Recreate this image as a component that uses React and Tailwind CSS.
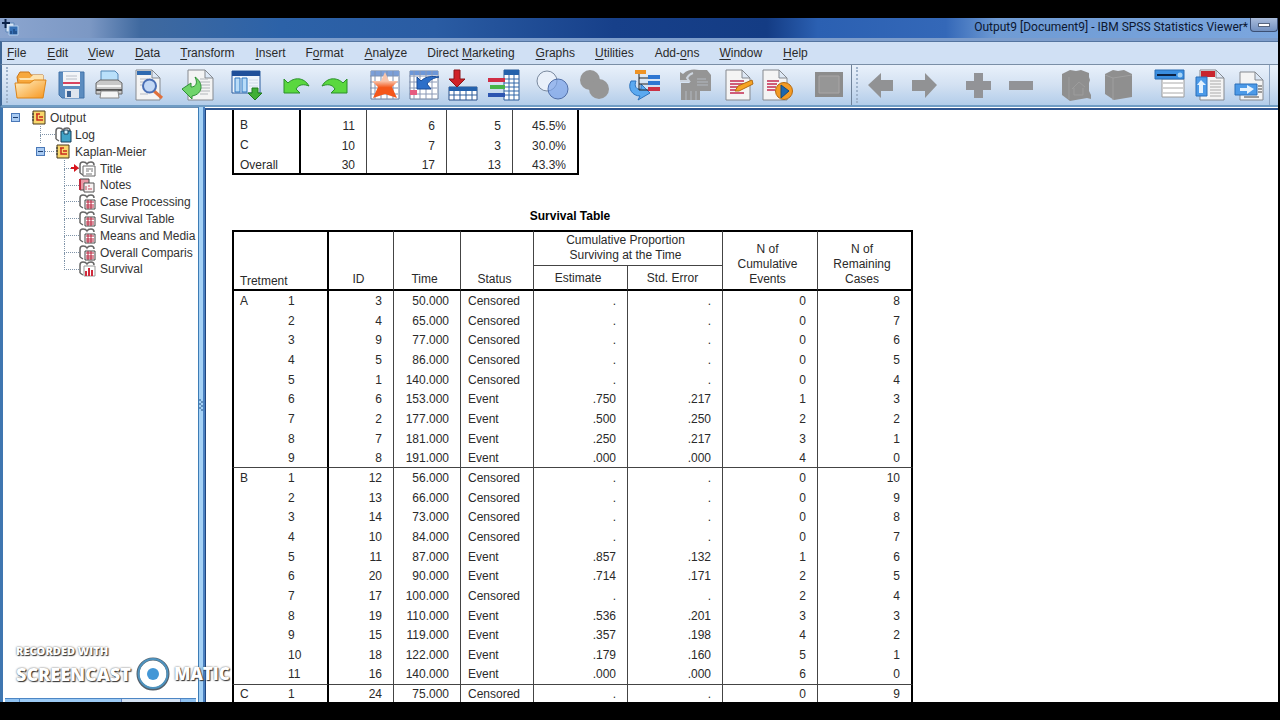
import React, { useState } from 'react'
import clsx from 'clsx'

const menus = [
  ['', 'F', 'ile'],
  ['', 'E', 'dit'],
  ['', 'V', 'iew'],
  ['', 'D', 'ata'],
  ['', 'T', 'ransform'],
  ['', 'I', 'nsert'],
  ['F', 'o', 'rmat'],
  ['', 'A', 'nalyze'],
  ['Direct ', 'M', 'arketing'],
  ['', 'G', 'raphs'],
  ['', 'U', 'tilities'],
  ['Add-', 'o', 'ns'],
  ['', 'W', 'indow'],
  ['', 'H', 'elp'],
]

const Page = ({ x = 4, w = 24 }) => (
  <path
    d={`M${x} 1h${w - 8}l8 8v22h-${w}z M${x + w - 8} 1v8h8`}
    fill="#f4f4f4"
    stroke="#85898f"
    strokeLinejoin="round"
  />
)

const grid = 'M1 7h28M1 13h28M1 19h28M1 25h28M6 2v28M12 2v28M18 2v28M24 2v28'

const icons = {
  open: (
    <>
      <path d="M2 8l3-5h9l2 3h12v14H4z" fill="#f7a83c" stroke="#c9761a" />
      <path d="M4 9h11l3-3h10v5H5z" fill="#fde3b0" />
      <path d="M0 14h15l4-3h12l-3 18H2z" fill="url(#folder)" stroke="#dd8417" />
    </>
  ),
  save: (
    <>
      <path d="M5 3h25v26H8l-3-3z" fill="#5b8cc0" stroke="#4372a8" />
      <path d="M9 3h17v14H9z" fill="#f3f5f8" />
      <path d="M12 7h11M12 10h11" stroke="#b9bec8" />
      <path d="M9 14h17" stroke="#d8435f" strokeWidth="2" />
      <path d="M11 20h14v9H11z" fill="#dfe5ee" />
      <path d="M13 22h4v6h-4z" fill="#3c6395" />
    </>
  ),
  print: (
    <>
      <path d="M8 13V2h14l3 3v8z" fill="#b9e0fa" stroke="#5287b5" />
      <path d="M3 14l4-3h18l4 3v11H3z" fill="#c8c8c8" stroke="#666" />
      <path d="M4 17h24" stroke="#f5f5f5" strokeWidth="2" />
      <path d="M3 21h26" stroke="#555" strokeWidth="2" />
      <path d="M8 22h17l1 7H7z" fill="#f5f5f5" stroke="#888" />
    </>
  ),
  preview: (
    <>
      <Page />
      <path d="M5 2h14v4H5z" fill="#2f6ab0" />
      <path d="M8 10h8M8 13h5M8 16h4M8 25h8" stroke="#b8bcc4" />
      <path d="M22 22l8 7" stroke="#e0703c" strokeWidth="3" />
      <circle cx="17.500" cy="17" r="6.500" fill="#c3d8f5" stroke="#4a6fb5" strokeWidth="2" />
    </>
  ),
  exportDoc: (
    <>
      <Page x={6} w={25} />
      <path d="M18 10h8M18 13h10M18 16h10M18 19h10M18 22h10M18 25h8" stroke="#b2b6bb" />
      <path d="M0 20l9-6v4c5 0 7-4 4-10 8 5 9 17-3 19v3z" fill="#6fd46a" stroke="#2e8e35" />
    </>
  ),
  dialogs: (
    <>
      <path d="M2 2h28v22H2z" fill="#eef4fb" stroke="#2a5d9e" />
      <path d="M2 2h28v5H2z" fill="#1f4f99" />
      <path d="M5 9h5v14H5zM12 9h5v14h-5z" fill="#b9dcf8" stroke="#2f77bf" />
      <path d="M19 11h9M19 14h9M19 17h9" stroke="#cfd9e6" />
      <path d="M22 19h6v5h4l-7 7-7-7h4z" fill="#3fae35" stroke="#1f7a1c" />
    </>
  ),
  undo: <path d="M4 10l4 4c6-6 16-6 21 3-5-2-10-2-13 3l4 4H4z" fill="#5ad83f" stroke="#2a8f2a" />,
  redo: <path d="M28 10l-4 4C18 8 8 8 3 17c5-2 10-2 13 3l-4 4h16z" fill="#5ad83f" stroke="#2a8f2a" />,
  gotoData: (
    <>
      <path d="M2 2h28v28H2z" fill="#fff" stroke="#6c7f9c" />
      <path d="M2 2h28v5H2z" fill="#7b9fd8" />
      <path d={grid} stroke="#7f92b3" />
      <path d="M16 3l4 9h9l-6 6 5 11-12-4-12 4 5-11-6-6h9z" fill="url(#star)" />
    </>
  ),
  gotoCase: (
    <>
      <path d="M2 2h28v28H2z" fill="#fff" stroke="#6c7f9c" />
      <path d="M2 2h28v4H2z" fill="#6d97d8" />
      <path d={grid} stroke="#8a98b5" />
      <path d="M2 21h7v5H2z" fill="#e65c80" />
      <path d="M9 20V8l4 4c5-5 11-5 18-4-6 1-9 3-12 7l4 5z" fill="#2d6fc9" stroke="#1b4d98" />
    </>
  ),
  variables: (
    <>
      <path d="M2 18h28v13H2z" fill="#fff" stroke="#294f87" />
      <path d="M2 18h28v4H2z" fill="#2461ac" />
      <path d="M2 26h28M7 22v9M13 22v9M19 22v9M25 22v9" stroke="#2c5c9b" />
      <path d="M7 1h6v9h5l-8 8-8-8h5z" fill="#cf2127" stroke="#8b1519" />
    </>
  ),
  usevars: (
    <>
      <path d="M16 1h15v30H16z" fill="#fff" stroke="#2d5c99" />
      <path d="M16 1h15v5H16z" fill="#2361ab" />
      <path d="M16 10h15M16 14h15M16 18h15M16 22h15M16 26h15M21 6v25M26 6v25" stroke="#3167a8" />
      <path d="M0 11h17" stroke="#cf2e45" strokeWidth="4" />
      <path d="M2 18h15" stroke="#46b548" strokeWidth="4" />
      <path d="M0 26h17" stroke="#2d55b0" strokeWidth="4" />
    </>
  ),
  select: (
    <>
      <circle cx="11" cy="12" r="10" fill="#e9f0fa" stroke="#7b8a9f" />
      <circle cx="22" cy="20" r="10" fill="#7ba2e8" fillOpacity="0.700" stroke="#516fa8" />
    </>
  ),
  union: (
    <g fill="#969696">
      <circle cx="13" cy="11" r="10" />
      <circle cx="22" cy="20" r="10" />
    </g>
  ),
  sets: (
    <>
      <path d="M2 12c-4 8 2 15 9 15l-2 4 12-7-9-9v5c-5 1-7-3-5-8z" fill="#5ba9f0" stroke="#2e73bd" />
      <path d="M10 3v18h12M10 9h10M10 15h12" stroke="#222" fill="none" />
      <path d="M6 3h11" stroke="#ef9325" strokeWidth="4" />
      <path d="M19 8h12M19 14h12" stroke="#2d76d2" strokeWidth="4" />
      <path d="M19 20h12" stroke="#cb3145" strokeWidth="4" />
    </>
  ),
  script: (
    <g fill="#959595">
      <path d="M1 3l3 2c5-5 11-5 16-4h8l4 5v16H21v9H2V14h9L9 11H1z" />
      <path d="M18 10h9M18 13h11M18 16h11M7 22v9M12 22v9M17 22v9" stroke="#b2b8c0" />
      <path d="M1 12h9l-2-3c1-2 3-4 6-5" stroke="#cdd5df" strokeWidth="2" fill="none" />
    </g>
  ),
  edit: (
    <>
      <Page />
      <path d="M8 12h14M8 15h14M8 18h10M8 21h8M8 24h14" stroke="#c32a50" strokeWidth="1.500" />
      <path d="M13 22l3-5 14-6 1 4-14 7z" fill="#f7a325" stroke="#b36b12" />
    </>
  ),
  run: (
    <>
      <Page x={2} />
      <path d="M6 12h12M6 15h10M6 18h9M6 21h8" stroke="#c32a50" strokeWidth="1.500" />
      <circle cx="23" cy="22" r="8.500" fill="#f49b24" stroke="#b56a12" />
      <path d="M20 16l8 6-8 7z" fill="#1f67ad" stroke="#134a80" />
    </>
  ),
  designate: (
    <>
      <path d="M2 3h28v25H2z" fill="#8c8c8c" />
      <path d="M6 7h20v17H6z" fill="#969696" stroke="#a9a6a6" />
    </>
  ),
  back: <path d="M3 16L16 4v7h12v11H16v7z" fill="#919294" />,
  forward: <path d="M29 16L17 4v7H4v11h13v7z" fill="#919294" />,
  plus: <path d="M12 4h9v8h8v9h-8v8h-9v-8H4v-9h8z" fill="#929397" />,
  minus: <path d="M4 12h24v9H4z" fill="#929397" />,
  openBook: (
    <g fill="#8f8f8f">
      <path d="M3 5l8-4 6 1 5-1 8 3v4l1 3-1 3v8l2 4v4l-4-1-17 3-8-6z" />
      <path d="M10 8v22M13 20l7-7 6 5M15 19v7h9v-7" stroke="#9c9c9c" fill="none" />
    </g>
  ),
  closedBook: (
    <g fill="#8f8f8f">
      <path d="M3 5l8-4 5 1 6-1 8 4v23l-18 3-9-6z" />
      <path d="M3 6l8 3 19-3M11 9v22" stroke="#9f9f9f" fill="none" />
    </g>
  ),
  heading: (
    <>
      <path d="M8 10h22v18H8z" fill="#fff" stroke="#9a9a9a" />
      <path d="M9 14h20M9 19h20M9 24h20" stroke="#aaa" />
      <path d="M1 1h29v9H1z" fill="#3a8ee0" stroke="#2a6db4" />
      <path d="M3 6h19" stroke="#0d2344" strokeWidth="2" />
      <circle cx="26" cy="6" r="2.500" fill="#a6d4f7" />
    </>
  ),
  insertTitle: (
    <>
      <Page x={5} />
      <path d="M6 2h14v6H6z" fill="#c9252d" />
      <path d="M15 12h11M15 15h11M15 18h11M15 21h11M15 24h11M15 27h11" stroke="#aaa" />
      <path d="M1 8h11v19H1z" fill="#4c9ae8" stroke="#2b6fb8" />
      <path d="M4 24v-8H2l4-5 5 5H8v8z" fill="#e4f2fe" />
    </>
  ),
  insertText: (
    <>
      <path d="M6 3h15l8 8v20H6z M21 3v8h8" fill="#f4f4f4" stroke="#85898f" />
      <path d="M24 17h4M24 20h4M24 23h4M10 28h15" stroke="#444" />
      <path d="M1 15h22v11H1z" fill="#4c9ae8" stroke="#2b6fb8" />
      <path d="M6 19h7v-3l7 4-7 5v-3H6z" fill="#e4f2fe" />
    </>
  ),
}

const mainTools = [
  ['open', 'Open data document', 'ml-0'],
  ['save', 'Save this document', 'ml-[7px]'],
  ['print', 'Print', 'ml-[7px]'],
  ['preview', 'Print preview', 'ml-[7px]'],
  ['exportDoc', 'Export', 'ml-[18px]'],
  ['dialogs', 'Recall recent dialogs', 'ml-4'],
  ['undo', 'Undo', 'ml-[18px]'],
  ['redo', 'Redo', 'ml-[7px]'],
  ['gotoData', 'Go to data', 'ml-[18px]'],
  ['gotoCase', 'Go to case', 'ml-[7px]'],
  ['variables', 'Go to variable', 'ml-[7px]'],
  ['usevars', 'Variables', 'ml-[9px]'],
  ['select', 'Use variable sets', 'ml-4'],
  ['union', 'Show all variables', 'ml-[9px]'],
  ['sets', 'Select last output', 'ml-5'],
  ['script', 'Associate autoscript', 'ml-[18px]'],
  ['edit', 'Create script', 'ml-[11px]'],
  ['run', 'Run script', 'ml-[7px]'],
  ['designate', 'Designate window', 'ml-5'],
]

const outlineTools = [
  ['back', 'Promote', 'ml-0'],
  ['forward', 'Demote', 'ml-[11px]'],
  ['plus', 'Expand', 'ml-[22px]'],
  ['minus', 'Collapse', 'ml-[11px]'],
  ['openBook', 'Show', 'ml-[22px]'],
  ['closedBook', 'Hide', 'ml-[11px]'],
  ['heading', 'Insert heading', 'ml-5'],
  ['insertTitle', 'Insert title', 'ml-[9px]'],
  ['insertText', 'Insert text', 'ml-[7px]'],
]

const outline = [
  { label: 'Title', kind: 'title', current: true },
  { label: 'Notes', kind: 'notes' },
  { label: 'Case Processing', kind: 'table' },
  { label: 'Survival Table', kind: 'table' },
  { label: 'Means and Media', kind: 'table' },
  { label: 'Overall Comparis', kind: 'table' },
  { label: 'Survival', kind: 'chart' },
]

const summary = [
  ['A', 9, 4, 5, '55.6%'],
  ['B', 11, 6, 5, '45.5%'],
  ['C', 10, 7, 3, '30.0%'],
  ['Overall', 30, 17, 13, '43.3%'],
]

// n, id, time, status, estimate, std. error, cumulative events, remaining cases
const groups = [
  {
    name: 'A',
    rows: [
      [1, 3, '50.000', 'Censored', '.', '.', 0, 8],
      [2, 4, '65.000', 'Censored', '.', '.', 0, 7],
      [3, 9, '77.000', 'Censored', '.', '.', 0, 6],
      [4, 5, '86.000', 'Censored', '.', '.', 0, 5],
      [5, 1, '140.000', 'Censored', '.', '.', 0, 4],
      [6, 6, '153.000', 'Event', '.750', '.217', 1, 3],
      [7, 2, '177.000', 'Event', '.500', '.250', 2, 2],
      [8, 7, '181.000', 'Event', '.250', '.217', 3, 1],
      [9, 8, '191.000', 'Event', '.000', '.000', 4, 0],
    ],
  },
  {
    name: 'B',
    rows: [
      [1, 12, '56.000', 'Censored', '.', '.', 0, 10],
      [2, 13, '66.000', 'Censored', '.', '.', 0, 9],
      [3, 14, '73.000', 'Censored', '.', '.', 0, 8],
      [4, 10, '84.000', 'Censored', '.', '.', 0, 7],
      [5, 11, '87.000', 'Event', '.857', '.132', 1, 6],
      [6, 20, '90.000', 'Event', '.714', '.171', 2, 5],
      [7, 17, '100.000', 'Censored', '.', '.', 2, 4],
      [8, 19, '110.000', 'Event', '.536', '.201', 3, 3],
      [9, 15, '119.000', 'Event', '.357', '.198', 4, 2],
      [10, 18, '122.000', 'Event', '.179', '.160', 5, 1],
      [11, 16, '140.000', 'Event', '.000', '.000', 6, 0],
    ],
  },
  { name: 'C', rows: [[1, 24, '75.000', 'Censored', '.', '.', 0, 9]] },
]

const Tool = ({ tool: [icon, label, space] }) => (
  <button aria-label={label} className={clsx('h-8 w-8 shrink-0', space)}>
    <svg viewBox="0 0 32 32" className="h-8 w-8 overflow-visible" fill="none">
      {icons[icon]}
    </svg>
  </button>
)

const BookIcon = () => (
  <svg viewBox="0 0 14 15" className="h-[15px] w-[14px] shrink-0">
    <path d="M1 1h12v13H1z" fill="#f8d76c" stroke="#4b3a1c" />
    <path d="M0 4h2M0 7h2M0 10h2" stroke="#222" />
    <path d="M4 4h4M5 4v6h2M7 7h4M7 10h4" stroke="#c82b1e" strokeWidth="1.500" fill="none" />
  </svg>
)

const LeafIcon = ({ kind }) => (
  <svg viewBox="0 0 17 16" className="h-4 w-[17px] shrink-0">
    {kind !== 'notes' && (
      <path d="M1 12V4q0-3 3-3t4 2q1-2 4-2t3 3M1 12l3 2" fill="#fff" stroke="#666" strokeWidth="1.500" />
    )}
    {kind === 'log' && (
      <>
        <path d="M6 4h10v11H6z" fill="#41a2c6" stroke="#163c57" />
        <path d="M9 3h4v4H9z" fill="#d6f0fa" stroke="#1b4560" />
      </>
    )}
    {kind === 'title' && (
      <>
        <path d="M4 5h12v10H4z" fill="#fff" stroke="#666" />
        <path d="M7 8h7M7 10h3M12 10h2M7 13h6" stroke="#777" />
      </>
    )}
    {kind === 'notes' && (
      <>
        <path d="M1 2h9v11H1z" fill="#e99aa6" stroke="#444" />
        <path d="M1 2v11" stroke="#c12a3e" strokeWidth="2" />
        <path d="M5 6h10v9H5z" fill="#f7f2f2" stroke="#555" />
        <path d="M7 9v4M10 8v2M9 12h4" stroke="#c54b5c" />
      </>
    )}
    {kind === 'table' && (
      <>
        <path d="M6 6h10v9H6z" fill="#fff" stroke="#444" />
        <path d="M7 8h8M7 11h8M7 13h8M9 6v9M12 6v9" stroke="#b8253f" />
      </>
    )}
    {kind === 'chart' && (
      <>
        <path d="M5 5h11v10H5z" fill="#fff" stroke="#999" />
        <path d="M7 10v5M10 7v8M13 9v6" stroke="#d02a3c" strokeWidth="2" />
      </>
    )}
  </svg>
)

const Toggle = ({ label, open, onClick }) => (
  <button
    aria-label={label}
    onClick={onClick}
    className="flex h-[9px] w-[9px] shrink-0 items-center justify-center border border-[#4a78b8] bg-[#a9cbf2]"
  >
    <svg viewBox="0 0 5 5" className="h-[5px] w-[5px]">
      <path d={open ? 'M0 2.500h5' : 'M0 2.500h5M2.500 0v5'} stroke="#1d3d70" />
    </svg>
  </button>
)

const Branch = ({ last, current }) => (
  <span className="flex h-full w-[15px] shrink-0 flex-col">
    <span className="flex h-[9px] items-end justify-end border-b border-l border-dotted border-[#7f93a8]">
      {current && (
        <svg viewBox="0 0 8 8" className="-mb-1 h-2 w-2">
          <path d="M0 3h3V0l5 4-5 4V5H0z" fill="#d8141c" />
        </svg>
      )}
    </span>
    {!last && <span className="flex-1 border-l border-dotted border-[#7f93a8]" />}
  </span>
)

const Sidebar = () => {
  const [open, setOpen] = useState(true)
  const [nested, setNested] = useState(true)
  const row = 'flex h-[17px] items-center whitespace-nowrap nth-[5n]:h-4'

  return (
    <aside className="flex w-[198px] shrink-0 flex-col overflow-hidden border-t border-l-3 border-t-[#6a8fb5] border-l-[#3f76b0] bg-white">
      <ul className="flex-1 overflow-hidden pt-px text-[12px] text-[#333]">
        <li className={row}>
          <span className="flex w-[29px] pl-2">
            <Toggle label="Output outline" open={open} onClick={() => setOpen(!open)} />
          </span>
          <BookIcon />
          <button className="ml-1">Output</button>
        </li>
        {open && (
          <>
            <li className={clsx(row, 'pl-[37px]')}>
              <Branch />
              <LeafIcon kind="log" />
              <button className="ml-[3px]">Log</button>
            </li>
            <li className={clsx(row, 'pl-[33px]')}>
              <Toggle label="Kaplan-Meier outline" open={nested} onClick={() => setNested(!nested)} />
              <span className="mr-[2px] w-[9px] border-b border-dotted border-[#7f93a8]" />
              <BookIcon />
              <button className="ml-[5px]">Kaplan-Meier</button>
            </li>
            {nested &&
              outline.map((item, i) => (
                <li key={item.label} className={clsx(row, 'pl-[61px]')}>
                  <Branch current={item.current} last={i === outline.length - 1} />
                  <LeafIcon kind={item.kind} />
                  <button className="ml-1">{item.label}</button>
                </li>
              ))}
          </>
        )}
      </ul>
      {/* top of the horizontal scroll bar */}
      <div className="mx-[2px] flex h-1 border-t border-[#4d86c4] bg-[#8fc1f0]">
        <span className="ml-[14px] w-[102px] border-l border-[#4d86c4] bg-[#9ccaf4]" />
        <span className="w-[60px] border-r border-l border-[#6a86c4] bg-[#d5e3f4]" />
      </div>
    </aside>
  )
}

const SummaryTable = () => (
  <div className="flex h-[65px] flex-col justify-end overflow-hidden">
    <table className="w-[347px] shrink-0 table-fixed border-separate border-spacing-0 border-2 border-black leading-[14px]">
      <colgroup>
        <col className="w-[67px]" />
        <col className="w-[66px]" />
        <col className="w-[80px]" />
        <col className="w-[66px]" />
        <col className="w-[64px]" />
      </colgroup>
      <tbody>
        {summary.map(([name, total, events, censored, percent]) => (
          <tr key={name} className="h-5 last:h-[19px] [&>td]:pt-[3px] [&>td]:pr-[11px] [&>td]:text-right">
            <th className="border-r-2 border-black p-0 pt-[2px] pl-[6px] text-left font-normal">{name}</th>
            <td className="border-r border-[#444]">{total}</td>
            <td className="border-r border-[#444]">{events}</td>
            <td className="border-r border-[#444]">{censored}</td>
            <td>{percent}</td>
          </tr>
        ))}
      </tbody>
    </table>
  </div>
)

const SurvivalTable = () => {
  const head = 'border-b-2 border-b-black p-0 font-normal'
  const line = 'border-r border-r-[#444]'
  const tall = 'border-t-2 border-t-black pr-[5px] pb-[2px]'

  return (
    <table className="w-[681px] table-fixed border-separate border-spacing-0">
      <caption className="pt-8 pr-[5px] pb-[5px] text-center leading-[18px] font-bold text-black">
        Survival Table
      </caption>
      <colgroup>
        <col className="w-[48px]" />
        <col className="w-[49px]" />
        <col className="w-[65px]" />
        <col className="w-[67px]" />
        <col className="w-[73px]" />
        <col className="w-[94px]" />
        <col className="w-[95px]" />
        <col className="w-[95px]" />
        <col className="w-[95px]" />
      </colgroup>
      <thead className="leading-[15px] [&_th]:align-bottom">
        <tr className="h-9">
          <th colSpan={2} rowSpan={2} className={clsx(head, 'border-t-2 border-r-2 border-l-2 border-black pl-[6px] text-left')}>
            Tretment
          </th>
          <th rowSpan={2} className={clsx(head, line, tall)}>ID</th>
          <th rowSpan={2} className={clsx(head, line, tall)}>Time</th>
          <th rowSpan={2} className={clsx(head, line, tall)}>Status</th>
          <th colSpan={2} className={clsx(line, 'border-t-2 border-b border-t-black border-b-[#444] p-0 pr-[5px] pb-[2px] font-normal')}>
            Cumulative Proportion
            <br />
            Surviving at the Time
          </th>
          <th rowSpan={2} className={clsx(head, line, tall)}>
            N of
            <br />
            Cumulative
            <br />
            Events
          </th>
          <th rowSpan={2} className={clsx(head, 'border-t-2 border-r-2 border-black pr-[5px] pb-[2px]')}>
            N of
            <br />
            Remaining
            <br />
            Cases
          </th>
        </tr>
        <tr className="h-[25px]">
          <th className={clsx(head, line, 'pr-[5px] pb-[3px]')}>Estimate</th>
          <th className={clsx(head, line, 'pr-[5px] pb-[3px]')}>Std. Error</th>
        </tr>
      </thead>
      {groups.map((group) => (
        <tbody key={group.name} className="leading-4 [&>tr:last-child>*]:border-b [&>tr:last-child>*]:border-b-[#444]">
          {group.rows.map(([n, id, time, status, estimate, error, events, remaining], i) => (
            <tr key={n} className="h-5 nth-[3n]:h-[19px] [&>*]:pt-0 [&>*]:pb-px">
              <th className="border-l-2 border-l-black pr-0 pl-[6px] text-left font-normal">
                {i === 0 && group.name}
              </th>
              <td className="border-r-2 border-r-black pl-2">{n}</td>
              <td className={clsx(line, 'pr-[11px] text-right')}>{id}</td>
              <td className={clsx(line, 'pr-[11px] text-right')}>{time}</td>
              <td className={clsx(line, 'pl-[7px]')}>{status}</td>
              <td className={clsx(line, 'pr-[11px] text-right')}>{estimate}</td>
              <td className={clsx(line, 'pr-[11px] text-right')}>{error}</td>
              <td className={clsx(line, 'pr-[11px] text-right')}>{events}</td>
              <td className="border-r-2 border-r-black pr-[11px] text-right">{remaining}</td>
            </tr>
          ))}
        </tbody>
      ))}
    </table>
  )
}

const Watermark = () => (
  <div className="pointer-events-none absolute bottom-[11px] left-4 font-['Open_Sans',sans-serif] font-extrabold text-white [text-shadow:1px_1px_1px_#333,0_0_2px_#555]">
    <p className="text-[11px] leading-3">RECORDED WITH</p>
    <div className="flex items-center text-[17px] leading-8">
      <span className="w-[120px] text-[18px]">SCREENCAST</span>
      <svg viewBox="0 0 34 34" className="mr-1 h-[34px] w-[34px]">
        <circle cx="17" cy="17" r="15" fill="#fff" stroke="#54606b" strokeWidth="3" />
        <circle cx="17" cy="16.500" r="14.500" fill="none" stroke="#4e93bf" strokeWidth="2" />
        <circle cx="17" cy="17" r="6" fill="#4497d6" />
      </svg>
      <span>MATIC</span>
    </div>
  </div>
)

export default function App() {
  return (
    <div className="flex h-screen flex-col overflow-hidden bg-black py-[18px] pr-[2px] font-['Liberation_Sans',Arial,sans-serif] text-[12px] text-[#2a2a2a]">
      <svg className="absolute h-0 w-0" aria-hidden="true">
        <defs>
          <linearGradient id="folder" x1="0" y1="0" x2="1" y2="1">
            <stop offset="0" stopColor="#fff0c4" />
            <stop offset="1" stopColor="#f7961e" />
          </linearGradient>
          <linearGradient id="star" x1="0" y1="0" x2="0" y2="1">
            <stop offset="0.350" stopColor="#f9c5ac" />
            <stop offset="0.600" stopColor="#f4571b" />
          </linearGradient>
        </defs>
      </svg>

      <header className="shrink-0">
        <div className="flex h-[23px] items-start border-b-3 border-[#7d9dcb] bg-[linear-gradient(to_right,#8ba5cf_0%,#7c98c4_7%,#3f699f_11%,#2c62a8_22%,#2a5ca3_34%,#17408a_48%,#143c84_60%,#2b60b2_64%,#3468b8_74%,#6f9bd4_78%,#7ba6de_100%)] pl-[2px]">
          <svg viewBox="0 0 17 17" className="mt-px h-[17px] w-[17px]">
            <path d="M4 4h8v9H4z" fill="#d8e6f5" stroke="#5d85b8" />
            <path d="M7 7h9v9H7z" fill="#3670b5" stroke="#b4cfec" />
            <path d="M9 12v3M12 10v5M14 12v3" stroke="#12386c" />
            <path d="M0 4h8M3.500 0v9" stroke="#0c2349" strokeWidth="2" />
          </svg>
          <h1 className="ml-auto font-['Roboto',sans-serif] text-[12px] leading-[18px] text-[#0c1730]">
            Output9 [Document9] - IBM SPSS Statistics Viewer*
          </h1>
          <button
            aria-label="Minimize"
            className="ml-[2px] flex h-[14px] w-7 items-center justify-center rounded-b border border-t-0 border-[#3b4f74] bg-linear-to-b from-[#a9bcdb] to-[#7391c0]"
          >
            <span className="h-1 w-3 border border-[#56657f] bg-white" />
          </button>
        </div>

        <nav className="flex h-[24px] items-center gap-5 border-t border-b border-l-2 border-t-[#54749f] border-b-[#7a8ea6] border-l-[#3f6796] bg-[#d0e0f4] pl-[5px]">
          {menus.map(([before, key, after]) => (
            <button key={before + key + after} className="whitespace-pre odd:pr-px">
              {before}
              <u className="underline-offset-2">{key}</u>
              {after}
            </button>
          ))}
        </nav>

        <div className="flex h-[42px] border-b-2 border-l-2 border-b-[#6f9cc4] border-l-[#3f6796] bg-linear-to-b from-[#e9f1fb] via-[#d3e1f2] to-[#b3cdea] pr-2">
          <div className="flex items-center border-r border-[#6f8299] pr-[6px]">
            <span className="mr-[7px] ml-1 h-9 border-l-2 border-dotted border-[#9fb3cb]" />
            {mainTools.map((tool) => (
              <Tool key={tool[0]} tool={tool} />
            ))}
          </div>
          <div className="flex flex-1 items-center border-r border-[#8fa6c2]">
            <span className="mr-[7px] ml-1 h-9 border-l-2 border-dotted border-[#9fb3cb]" />
            {outlineTools.map((tool) => (
              <Tool key={tool[0]} tool={tool} />
            ))}
          </div>
        </div>
      </header>

      <div className="relative flex min-h-0 flex-1 bg-white">
        <Sidebar />
        <div className="flex w-[7px] shrink-0 flex-col items-center justify-center border-r-2 border-l border-r-[#4a80c0] border-l-[#3d7cb5] bg-[#a5d2f6]">
          <svg viewBox="0 0 4 14" className="h-[14px] w-1">
            <path d="M0 2h2M2 4h2M0 6h2M2 8h2M0 10h2M2 12h2" stroke="#1f4f86" />
          </svg>
        </div>
        <main className="mt-px flex-1 overflow-hidden border-t-2 border-l border-t-[#2f5590] border-l-[#1f4680] bg-white pl-[26px]">
          <SummaryTable />
          <SurvivalTable />
        </main>
        <Watermark />
      </div>
    </div>
  )
}
